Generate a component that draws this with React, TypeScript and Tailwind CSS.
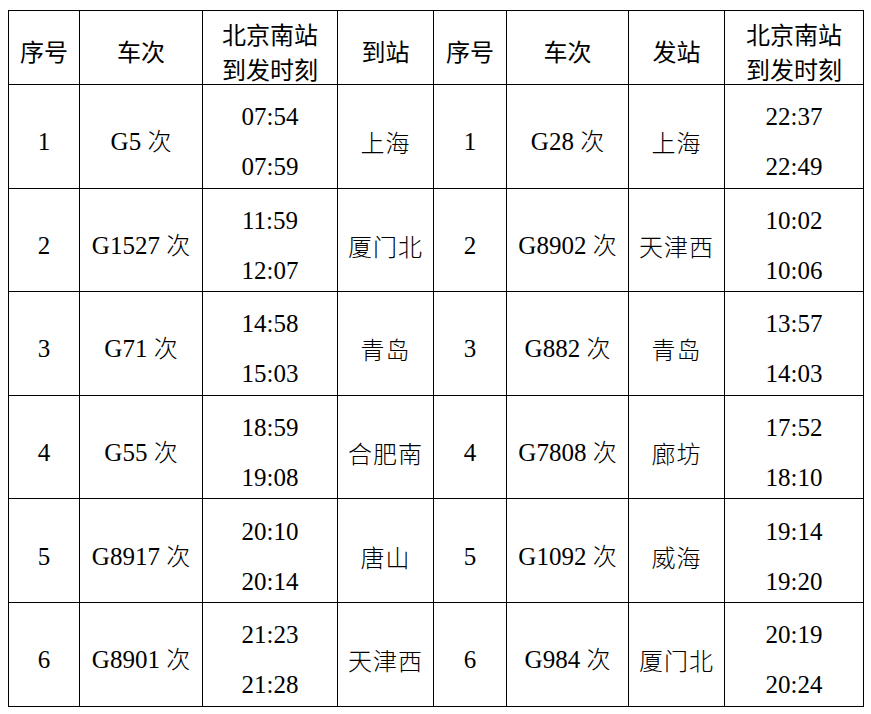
type Row = {
  no: number;
  arrTrain: string;
  arrTimes: [string, string];
  to: string;
  depTrain: string;
  from: string;
  depTimes: [string, string];
};

const rows: Row[] = [
  { no: 1, arrTrain: 'G5', arrTimes: ['07:54', '07:59'], to: '上海', depTrain: 'G28', from: '上海', depTimes: ['22:37', '22:49'] },
  { no: 2, arrTrain: 'G1527', arrTimes: ['11:59', '12:07'], to: '厦门北', depTrain: 'G8902', from: '天津西', depTimes: ['10:02', '10:06'] },
  { no: 3, arrTrain: 'G71', arrTimes: ['14:58', '15:03'], to: '青岛', depTrain: 'G882', from: '青岛', depTimes: ['13:57', '14:03'] },
  { no: 4, arrTrain: 'G55', arrTimes: ['18:59', '19:08'], to: '合肥南', depTrain: 'G7808', from: '廊坊', depTimes: ['17:52', '18:10'] },
  { no: 5, arrTrain: 'G8917', arrTimes: ['20:10', '20:14'], to: '唐山', depTrain: 'G1092', from: '威海', depTimes: ['19:14', '19:20'] },
  { no: 6, arrTrain: 'G8901', arrTimes: ['21:23', '21:28'], to: '天津西', depTrain: 'G984', from: '厦门北', depTimes: ['20:19', '20:24'] },
];

const serif = "font-['Liberation_Serif','DejaVu_Serif',serif] text-[25px]";
const cjk = "font-['Noto_Sans_CJK_SC',sans-serif] font-light text-[24px]";
const th = "border-[1.5px] border-black p-0 text-center align-middle font-['Noto_Sans_CJK_SC',sans-serif] text-[24px] leading-[35px] font-normal text-black";
const td = 'border-[1.5px] border-black p-0 text-center align-middle text-black';

// shifts content a little below the cell centre, as in the source document
function Cell({ children, className = '' }: { children: React.ReactNode; className?: string }) {
  return <div className={`mt-[6px] -mb-[6px] ${className}`}>{children}</div>;
}

function Train({ code }: { code: string }) {
  return (
    <Cell className="whitespace-nowrap leading-[30px]">
      <span className={serif}>{code} </span>
      <span className={cjk}>次</span>
    </Cell>
  );
}

function Times({ t }: { t: [string, string] }) {
  return (
    <Cell className={`${serif} leading-[50px]`}>
      <div>{t[0]}</div>
      <div>{t[1]}</div>
    </Cell>
  );
}

export default function App() {
  return (
    <div className="w-[871px] h-[714px] bg-white pl-[8px] pt-[10px]">
      <table className="table-fixed border-collapse w-[855px]">
        <colgroup>
          <col className="w-[71px]" />
          <col className="w-[123px]" />
          <col className="w-[135px]" />
          <col className="w-[96px]" />
          <col className="w-[73px]" />
          <col className="w-[122px]" />
          <col className="w-[96px]" />
          <col className="w-[139px]" />
        </colgroup>
        <thead>
          <tr className="h-[74px]">
            {['序号', '车次', '北京南站|到发时刻', '到站', '序号', '车次', '发站', '北京南站|到发时刻'].map((h, i) => (
              <th key={i} className={th}>
                <div className="mt-[3px] -mb-[3px]">
                  {h.split('|').map((line) => (
                    <div key={line}>{line}</div>
                  ))}
                </div>
              </th>
            ))}
          </tr>
        </thead>
        <tbody>
          {rows.map((r) => (
            <tr key={r.no} className="h-[103.6px]">
              <td className={td}><Cell className={`${serif} leading-[30px]`}>{r.no}</Cell></td>
              <td className={td}><Train code={r.arrTrain} /></td>
              <td className={td}><Times t={r.arrTimes} /></td>
              <td className={td}><Cell className={`${cjk} leading-[30px] tracking-[1px]`}>{r.to}</Cell></td>
              <td className={td}><Cell className={`${serif} leading-[30px]`}>{r.no}</Cell></td>
              <td className={td}><Train code={r.depTrain} /></td>
              <td className={td}><Cell className={`${cjk} leading-[30px] tracking-[1px]`}>{r.from}</Cell></td>
              <td className={td}><Times t={r.depTimes} /></td>
            </tr>
          ))}
        </tbody>
      </table>
    </div>
  );
}
